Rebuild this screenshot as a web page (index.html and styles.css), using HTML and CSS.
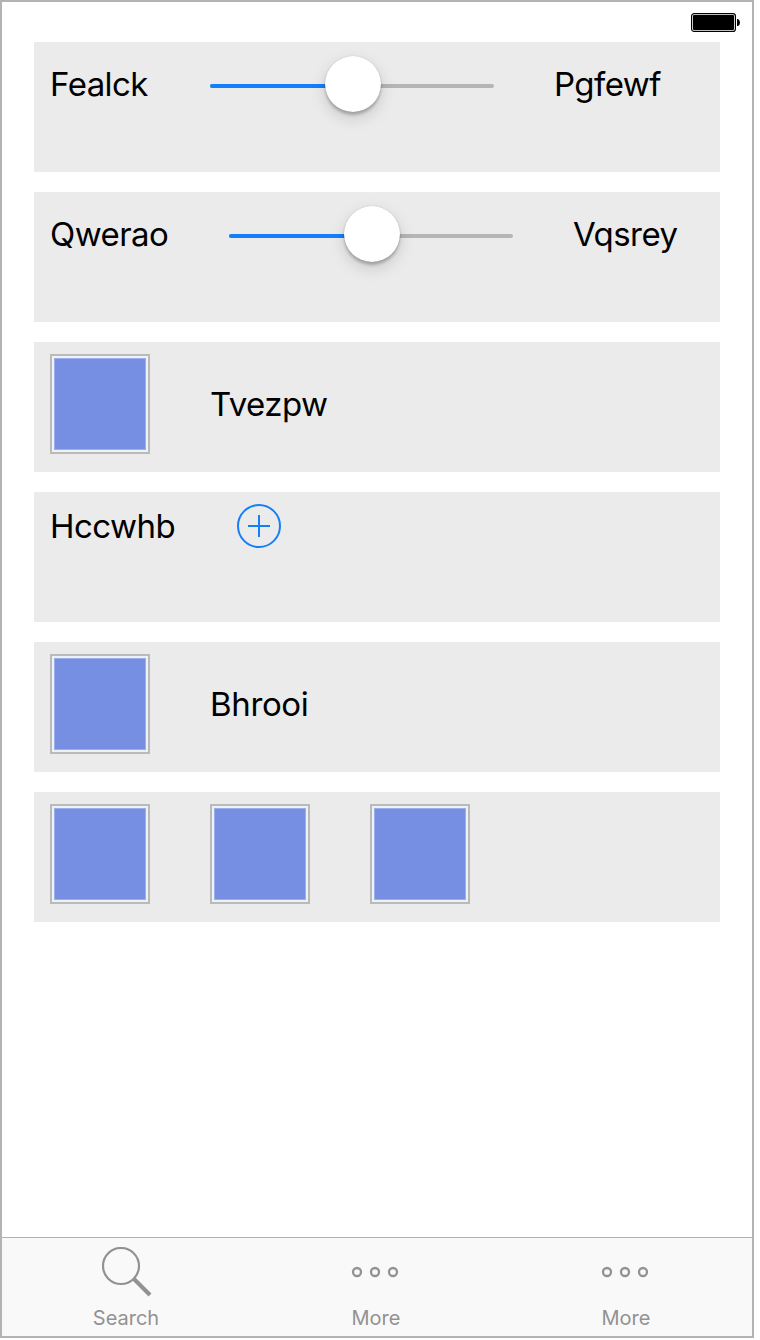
FILE: index.html
```html
<!DOCTYPE html>
<html lang="en">
<head>
<meta charset="utf-8">
<title>Controls</title>
<link rel="stylesheet" href="styles.css">
</head>
<body>
<div class="screen">
  <header class="status">
    <svg class="battery" width="50" height="20" viewBox="0 0 50 20">
      <rect x=".6" y=".6" width="43.8" height="17.8" rx="2.5" fill="#fff" stroke="#000" stroke-width="1.2"/>
      <rect x="2" y="2" width="41" height="15" rx="1" fill="#000"/>
      <path d="M46 6h1q2 1 2 3.5T47 13h-1z" fill="#000"/>
    </svg>
  </header>
  <main class="list">
    <section class="card">
      <div class="row row-slider">
        <span class="label fealck">Fealck</span>
        <div class="slider"><div class="fill"></div><div class="thumb"></div></div>
        <span class="label pgfewf">Pgfewf</span>
      </div>
    </section>
    <section class="card">
      <div class="row row-slider">
        <span class="label qwerao">Qwerao</span>
        <div class="slider"><div class="fill"></div><div class="thumb"></div></div>
        <span class="label vqsrey">Vqsrey</span>
      </div>
    </section>
    <section class="card">
      <div class="row"><div class="swatch"></div><span class="label tvezpw">Tvezpw</span></div>
    </section>
    <section class="card">
      <div class="row">
        <span class="label hccwhb">Hccwhb</span>
        <svg class="add" width="44" height="44" viewBox="0 0 44 44" fill="none" stroke="#157efb" stroke-width="2">
          <circle cx="22" cy="22" r="21"/><path d="M11 22h22M22 11v22"/>
        </svg>
      </div>
    </section>
    <section class="card">
      <div class="row"><div class="swatch"></div><span class="label bhrooi">Bhrooi</span></div>
    </section>
    <section class="card">
      <div class="row"><div class="swatch"></div><div class="swatch"></div><div class="swatch"></div></div>
    </section>
  </main>
  <nav class="tabs">
    <div class="tab">
      <svg class="magnifier" width="50" height="50" viewBox="0 0 50 50" fill="none" stroke="#929292">
        <circle cx="19" cy="19" r="18" stroke-width="2.2"/><path d="M31.5 31.5L48 48" stroke-width="4"/>
      </svg>
      <span class="tab-text">Search</span>
    </div>
    <div class="tab">
      <svg width="50" height="50" viewBox="0 0 50 50" fill="none" stroke="#929292" stroke-width="2.3">
        <circle cx="7" cy="25" r="4"/><circle cx="25" cy="25" r="4"/><circle cx="43" cy="25" r="4"/>
      </svg>
      <span class="tab-text">More</span>
    </div>
    <div class="tab">
      <svg width="50" height="50" viewBox="0 0 50 50" fill="none" stroke="#929292" stroke-width="2.3">
        <circle cx="7" cy="25" r="4"/><circle cx="25" cy="25" r="4"/><circle cx="43" cy="25" r="4"/>
      </svg>
      <span class="tab-text">More</span>
    </div>
  </nav>
</div>
</body>
</html>
```
FILE: styles.css
```css
* { box-sizing: border-box; }
body {
  margin: 0;
  background: #fff;
  color: #000;
  font-family: Inter, "Liberation Sans", sans-serif;
}
svg { display: block; flex: none; }
.screen {
  display: flex;
  flex-direction: column;
  width: 754px;
  height: 1338px;
  border: 2px solid #b3b3b3;
}
.status {
  display: flex;
  justify-content: flex-end;
  height: 40px;
  padding: 11px 11px 0 0;
}
.list {
  display: flex;
  flex: 1;
  flex-direction: column;
  gap: 20px;
  padding: 0 32px;
}
.card {
  height: 130px;
  padding: 12px 16px;
  background: #ebebeb;
}
.row { display: flex; align-items: center; gap: 60px; }
.row-slider { height: 60px; }
.label {
  flex: none;
  font-size: 33px;
  line-height: 40px;
  letter-spacing: -.55px;
  white-space: nowrap;
}
.fealck { width: 100px; }
.qwerao { width: 119px; }
.hccwhb { width: 127px; }
.bhrooi { letter-spacing: -.35px; }
.slider {
  position: relative;
  flex: none;
  width: 284px;
  height: 4px;
  margin-top: 4px;
  border-radius: 2px;
  background: #b5b5b5;
}
.fill {
  width: 50%;
  height: 4px;
  border-radius: 2px;
  background: #157efb;
}
.thumb {
  position: absolute;
  top: -28px;
  left: 115px;
  width: 56px;
  height: 56px;
  border-radius: 50%;
  background: #fff;
  box-shadow: 0 0 1px rgba(0,0,0,.25), 0 3px 3px rgba(0,0,0,.22), 0 6px 16px rgba(0,0,0,.15);
}
.swatch {
  flex: none;
  width: 100px;
  height: 100px;
  padding: 2px;
  border: 2px solid #bababa;
  background: #eef1f5;
}
.swatch::before {
  content: "";
  display: block;
  box-sizing: border-box;
  height: 92px;
  border: 1px solid #9aadec;
  background: #768fe2;
}
.tabs {
  display: grid;
  grid-template-columns: repeat(3, 250px);
  height: 99px;
  border-top: 1px solid #b2b2b2;
  background: #f9f9f9;
}
.tab {
  display: flex;
  flex-direction: column;
  align-items: center;
  padding: 9px 2px 0 0;
  color: #929292;
}
.tab svg { margin-right: 2px; }
.tab .magnifier { margin: 0 0 0 2px; }
.tab-text {
  margin-top: 9px;
  font-size: 20px;
  line-height: 24px;
}
```
